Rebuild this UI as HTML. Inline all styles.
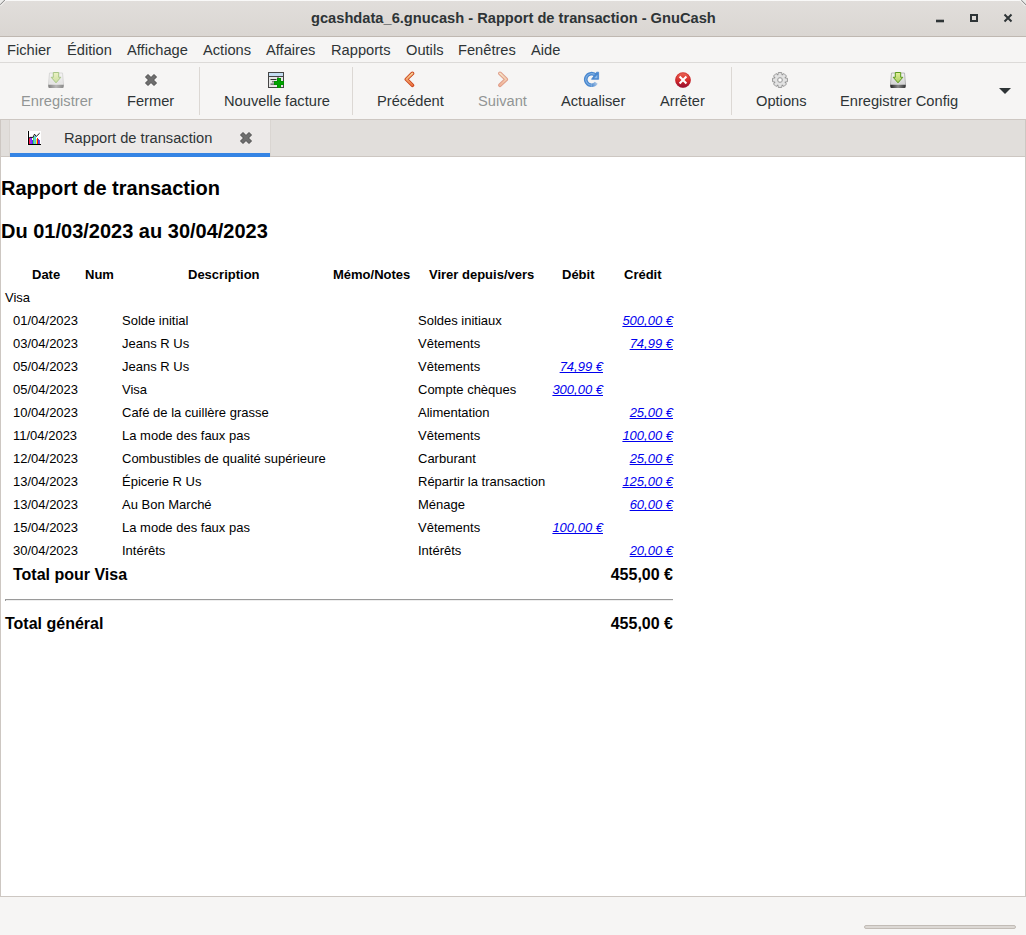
<!DOCTYPE html>
<html><head><meta charset="utf-8">
<style>
html,body{margin:0;padding:0;}
body{width:1026px;height:935px;position:relative;overflow:hidden;background:#f6f5f4;font-family:"Liberation Sans",sans-serif;color:#2e3436;}
.a{position:absolute;white-space:nowrap;}
#title{left:0;top:0;width:1026px;height:36px;background:linear-gradient(to bottom,#e1dedb,#dad6d2);border-bottom:1px solid #bfb8b1;box-shadow:inset 0 1px rgba(255,255,255,0.8);}

.ttl{font-weight:bold;font-size:14.667px;line-height:17px;}
.m{font-size:14.667px;line-height:17px;top:42px;}
#menubar{left:0;top:37px;width:1026px;height:25px;background:#f6f5f4;border-bottom:1px solid #dcdad8;}
#toolbar{left:0;top:63px;width:1026px;height:56px;background:#f6f5f4;border-bottom:1px solid #cdc7c2;}
.sep{position:absolute;top:67px;width:1px;height:48px;background:#dcd8d4;}
.tb{font-size:14.667px;line-height:17px;top:93px;}
.dis{color:#929595;}
#nb{left:0;top:120px;width:1024px;height:776px;border:1px solid #cdc7c2;border-top:0;background:#fff;}
#tabbar{left:1px;top:120px;width:1024px;height:36px;background:#e1dedb;border-bottom:1px solid #cdc7c2;}
#tab{left:10px;top:120px;width:260px;height:33px;background:#ece9e8;border-bottom:4px solid #3584e4;}
.r{color:#000;font-size:13px;line-height:15px;}
.b{font-weight:bold;}
.lnk{color:#0000ee;font-style:italic;text-decoration:underline;text-decoration-skip-ink:none;}
.rt{text-align:right;}
</style></head><body>

<div id="title" class="a"></div>
<svg class="a" style="left:0;top:0;" width="8" height="8" viewBox="0 0 8 8"><path d="M0 0 H5 L0 5 Z" fill="#ececea"/><path d="M0 4.8 L4.8 0" stroke="#808080" stroke-width="1"/><path d="M0.5 6 L6 0.5" stroke="#f4f3f2" stroke-width="1"/></svg>
<svg class="a" style="left:1018px;top:0;" width="8" height="8" viewBox="0 0 8 8"><path d="M8 0 H3 L8 5 Z" fill="#ececea"/><path d="M8 4.8 L3.2 0" stroke="#808080" stroke-width="1"/><path d="M7.5 6 L2 0.5" stroke="#f4f3f2" stroke-width="1"/></svg>
<div class="a ttl" style="left:311px;top:10px;">gcashdata_6.gnucash - Rapport de transaction - GnuCash</div>
<!-- window controls -->
<svg class="a" style="left:936px;top:18px;" width="8" height="6" viewBox="0 0 8 6"><rect x="0" y="1.7" width="8" height="2.6" fill="#2e3436"/></svg>
<div class="a" style="left:970px;top:14px;width:4px;height:4px;border:2px solid #2e3436;"></div>
<svg class="a" style="left:1003px;top:13px;" width="10" height="10" viewBox="0 0 10 10"><path d="M1.5 1.5 L8.5 8.5 M8.5 1.5 L1.5 8.5" stroke="#2e3436" stroke-width="2"/></svg>

<div id="menubar" class="a"></div>
<div class="a m" style="left:7px;">Fichier</div>
<div class="a m" style="left:67px;">Édition</div>
<div class="a m" style="left:127px;">Affichage</div>
<div class="a m" style="left:203px;">Actions</div>
<div class="a m" style="left:266px;">Affaires</div>
<div class="a m" style="left:331px;">Rapports</div>
<div class="a m" style="left:406px;">Outils</div>
<div class="a m" style="left:458px;">Fenêtres</div>
<div class="a m" style="left:531px;">Aide</div>

<div id="toolbar" class="a"></div>
<div class="sep" style="left:199px;"></div>
<div class="sep" style="left:352px;"></div>
<div class="sep" style="left:731px;"></div>
<div class="a tb dis" style="left:21px;">Enregistrer</div>
<div class="a tb" style="left:127px;">Fermer</div>
<div class="a tb" style="left:224px;">Nouvelle facture</div>
<div class="a tb" style="left:377px;">Précédent</div>
<div class="a tb dis" style="left:478px;">Suivant</div>
<div class="a tb" style="left:561px;">Actualiser</div>
<div class="a tb" style="left:660px;">Arrêter</div>
<div class="a tb" style="left:756px;">Options</div>
<div class="a tb" style="left:840px;">Enregistrer Config</div>
<svg class="a" style="left:998px;top:87px;" width="14" height="8" viewBox="0 0 14 8"><path d="M1 1 H13 L7 7 Z" fill="#2e3436"/></svg>

<div id="nb" class="a"></div>
<div id="tabbar" class="a"></div>
<div id="tab" class="a"></div>
<div class="a" style="left:9px;top:120px;width:1px;height:36px;background:#d9d5d1;"></div><div class="a" style="left:270px;top:120px;width:1px;height:36px;background:#d9d5d1;"></div>
<div class="a" style="left:64px;top:130px;font-size:14.667px;line-height:17px;">Rapport de transaction</div>


<!-- icons -->
<svg class="a" style="left:0;top:0;width:0;height:0">
<defs>
<linearGradient id="gDrive" x1="0" y1="0" x2="0" y2="1"><stop offset="0" stop-color="#f4f4f4"/><stop offset="1" stop-color="#d4d4d4"/></linearGradient>
<linearGradient id="gBand" x1="0" y1="0" x2="1" y2="0"><stop offset="0" stop-color="#222"/><stop offset="0.5" stop-color="#888"/><stop offset="1" stop-color="#333"/></linearGradient>
<linearGradient id="gBandD" x1="0" y1="0" x2="1" y2="0"><stop offset="0" stop-color="#aaa"/><stop offset="0.5" stop-color="#c4c4c4"/><stop offset="1" stop-color="#aaa"/></linearGradient>
<linearGradient id="gArrow" x1="0" y1="0" x2="0" y2="1"><stop offset="0" stop-color="#e4f09a"/><stop offset="1" stop-color="#a8cc60"/></linearGradient>
<linearGradient id="gChev" x1="0" y1="0" x2="0" y2="1"><stop offset="0" stop-color="#f8d49a"/><stop offset="1" stop-color="#ec7440"/></linearGradient>
<linearGradient id="gStop" x1="0" y1="0" x2="0" y2="1"><stop offset="0" stop-color="#ee6a58"/><stop offset="0.55" stop-color="#d42a2a"/><stop offset="1" stop-color="#8c0c34"/></linearGradient>
<linearGradient id="gRef" x1="0" y1="0" x2="0" y2="1"><stop offset="0" stop-color="#6ea0dc"/><stop offset="1" stop-color="#3f7fcc"/></linearGradient>
</defs></svg>

<!-- Enregistrer (disabled save) -->
<svg class="a" style="left:48px;top:72px;opacity:0.55" width="16" height="16" viewBox="0 0 16 16">
<path d="M1.5 1 H14.5 L15.5 12 H0.5 Z" fill="url(#gDrive)" stroke="#b8b8b8" stroke-width="0.8"/>
<rect x="0.3" y="12" width="15.4" height="4" rx="1.2" fill="url(#gBand)"/>
<rect x="1" y="11.6" width="14" height="1" fill="#f8f8f8"/>
<path d="M5.3 0.5 H10.7 V5.3 H12.8 L8 10.8 L3.2 5.3 H5.3 Z" fill="url(#gArrow)" stroke="#6aa030" stroke-width="1"/>
</svg>
<!-- Fermer X -->
<svg class="a" style="left:145px;top:74px;" width="12" height="12" viewBox="0 0 12 12">
<path d="M0.5 3 L3 0.5 L6 3.5 L9 0.5 L11.5 3 L8.5 6 L11.5 9 L9 11.5 L6 8.5 L3 11.5 L0.5 9 L3.5 6 Z" fill="#6e6e6e" stroke="#4a4a4a" stroke-width="1" stroke-linejoin="miter"/>
</svg>
<!-- Nouvelle facture -->
<svg class="a" style="left:268px;top:72px;" width="16" height="16" viewBox="0 0 16 16">
<rect x="0.5" y="0.5" width="15" height="15" fill="#e6e6e6" stroke="#454545" stroke-width="1"/>
<rect x="1" y="1" width="14" height="3" fill="#c4ddf2"/>
<rect x="1" y="4" width="14" height="1" fill="#454545"/>
<rect x="2.5" y="7" width="6" height="1" fill="#333"/>
<rect x="4" y="9.3" width="4" height="1" fill="#555"/>
<rect x="2.5" y="11.6" width="5" height="1" fill="#333"/>
<path d="M9 6 H13 V9 H16 V13 H13 V16 H9 V13 H6 V9 H9 Z" fill="#008c00"/>
<path d="M9.8 6.8 H12.2 V9.8 H15.2 V12.2 H12.2 V15.2 H9.8 V12.2 H6.8 V9.8 H9.8 Z" fill="#00a400"/>
<rect x="9.5" y="5" width="1" height="1" fill="#454545"/>
</svg>
<!-- Precedent -->
<svg class="a" style="left:402px;top:71px;" width="14" height="18" viewBox="0 0 14 18">
<path d="M10.4 2.4 L4.4 8.3 L10.4 14.2" fill="none" stroke="#c9441c" stroke-width="3.7" stroke-linecap="round" stroke-linejoin="round"/>
<path d="M10.4 2.4 L4.4 8.3 L10.4 14.2" fill="none" stroke="url(#gChev)" stroke-width="1.9" stroke-linecap="round" stroke-linejoin="round"/>
</svg>
<!-- Suivant (disabled) -->
<svg class="a" style="left:495px;top:71px;opacity:0.5" width="14" height="18" viewBox="0 0 14 18">
<path d="M5 2.4 L11.2 8.4 L5 14.2" fill="none" stroke="#c9441c" stroke-width="3.7" stroke-linecap="round" stroke-linejoin="round"/>
<path d="M5 2.4 L11.2 8.4 L5 14.2" fill="none" stroke="url(#gChev)" stroke-width="1.9" stroke-linecap="round" stroke-linejoin="round"/>
</svg>
<!-- Actualiser -->
<svg class="a" style="left:580px;top:68px;" width="24" height="24" viewBox="0 0 24 24">
<defs><linearGradient id="gTail" gradientUnits="userSpaceOnUse" x1="11" y1="17" x2="17" y2="14"><stop offset="0" stop-color="#4a88cf"/><stop offset="1" stop-color="#4a88cf" stop-opacity="0.35"/></linearGradient></defs>
<path d="M15.99 7.72 A5.8 5.8 0 1 0 11.55 17.25" fill="none" stroke="#4a88cf" stroke-width="3.6"/>
<path d="M11.55 17.25 A5.8 5.8 0 0 0 16.30 14.78" fill="none" stroke="url(#gTail)" stroke-width="3.6"/>
<path d="M15.99 7.72 A5.8 5.8 0 1 0 11.55 17.25" fill="none" stroke="#8fbbe9" stroke-width="1.1" opacity="0.8"/>
<path d="M16.6 4.2 H18.6 V11.3 H11.5 Z" fill="#4a88cf" stroke="#4a88cf" stroke-width="0.8" stroke-linejoin="round"/>
<path d="M17.4 6.8 V10.2 H14 Z" fill="#8fbbe9"/>
</svg>
<!-- Arreter -->
<svg class="a" style="left:675px;top:72px;" width="16" height="16" viewBox="0 0 16 16">
<circle cx="8" cy="8" r="7.8" fill="url(#gStop)"/>
<circle cx="8" cy="8" r="7.2" fill="none" stroke="#b81c2a" stroke-width="0.8" opacity="0.6"/>
<path d="M4.6 4.6 L11.4 11.4 M11.4 4.6 L4.6 11.4" stroke="#ffffff" stroke-width="2.1"/>
</svg>
<!-- Options gear -->
<svg class="a" style="left:772px;top:72px;" width="16" height="16" viewBox="0 0 16 16">
<path id="gear" d="M5.80 3.07 L6.29 0.59 L9.71 0.59 L10.20 3.07 L9.94 2.96 L12.03 1.55 L14.45 3.97 L13.04 6.06 L12.93 5.80 L15.41 6.29 L15.41 9.71 L12.93 10.20 L13.04 9.94 L14.45 12.03 L12.03 14.45 L9.94 13.04 L10.20 12.93 L9.71 15.41 L6.29 15.41 L5.80 12.93 L6.06 13.04 L3.97 14.45 L1.55 12.03 L2.96 9.94 L3.07 10.20 L0.59 9.71 L0.59 6.29 L3.07 5.80 L2.96 6.06 L1.55 3.97 L3.97 1.55 L6.06 2.96 Z" fill="#e2e2e2" stroke="#8e8e8e" stroke-width="0.9" stroke-linejoin="round"/>
<circle cx="8" cy="8" r="2.4" fill="none" stroke="#a0a0a0" stroke-width="1"/>
<circle cx="8" cy="8" r="1.3" fill="#ffffff"/>
</svg>
<!-- Enregistrer Config (save) -->
<svg class="a" style="left:890px;top:72px;" width="16" height="16" viewBox="0 0 16 16">
<path d="M1.5 1 H14.5 L15.5 12 H0.5 Z" fill="url(#gDrive)" stroke="#a8a8a8" stroke-width="0.8"/>
<rect x="0.3" y="12" width="15.4" height="4" rx="1.2" fill="url(#gBand)"/>
<rect x="1" y="11.6" width="14" height="1" fill="#f4f4f4"/>
<path d="M5.3 0.5 H10.7 V5.3 H12.8 L8 10.8 L3.2 5.3 H5.3 Z" fill="url(#gArrow)" stroke="#5a9a1c" stroke-width="1"/>
</svg>
<!-- tab chart icon -->
<svg class="a" style="left:27px;top:131px;" width="14" height="14" viewBox="0 0 14 14" shape-rendering="crispEdges">
<rect x="0" y="0" width="14" height="14" fill="#ffffff"/>
<rect x="2" y="7" width="1" height="6" fill="#ff1a4a"/>
<rect x="3" y="6" width="1" height="7" fill="#9b30f0"/>
<rect x="4" y="6" width="1" height="7" fill="#8a30f0"/>
<rect x="5" y="9" width="1" height="4" fill="#3838f0"/>
<rect x="6" y="6" width="1" height="7" fill="#38e858"/>
<rect x="7" y="5" width="1" height="8" fill="#88b0e0"/>
<rect x="8" y="5" width="1" height="8" fill="#38e0d8"/>
<rect x="9" y="8" width="1" height="5" fill="#f8f040"/>
<rect x="10" y="7" width="1" height="6" fill="#ff1010"/>
<rect x="11" y="8" width="1" height="5" fill="#3050f0"/>
<rect x="12" y="9" width="1" height="4" fill="#9030e0"/>
<path d="M1.8 7.2 L3 6.4 H6 L7.5 3.2 L9.3 5.4 L12.6 2.2" fill="none" stroke="#000" stroke-width="0.9" shape-rendering="auto"/>
<rect x="1" y="0" width="1" height="14" fill="#000"/>
<rect x="1" y="13" width="13" height="1" fill="#000"/>
</svg>
<!-- tab close X -->
<svg class="a" style="left:240px;top:132px;" width="12" height="12" viewBox="0 0 12 12">
<path d="M0.5 3 L3 0.5 L6 3.5 L9 0.5 L11.5 3 L8.5 6 L11.5 9 L9 11.5 L6 8.5 L3 11.5 L0.5 9 L3.5 6 Z" fill="#6e6e6e" stroke="#4a4a4a" stroke-width="1" stroke-linejoin="miter"/>
</svg>
<!-- progress bar in status -->
<div class="a" style="left:864px;top:925px;width:150px;height:2px;background:#dcd8d4;border:1px solid #c2bcb6;border-radius:3px;"></div>

<!-- report -->
<div class="a r b" style="left:1px;top:177px;font-size:20px;line-height:22px;">Rapport de transaction</div>
<div class="a r b" style="left:1px;top:220px;font-size:20px;line-height:22px;">Du 01/03/2023 au 30/04/2023</div>

<div style="--r0:313px;">
<div class="a r b" style="left:32px;top:267px;">Date</div>
<div class="a r b" style="left:85px;top:267px;">Num</div>
<div class="a r b" style="left:188px;top:267px;">Description</div>
<div class="a r b" style="left:333px;top:267px;">Mémo/Notes</div>
<div class="a r b" style="left:429px;top:267px;">Virer depuis/vers</div>
<div class="a r b" style="left:562px;top:267px;">Débit</div>
<div class="a r b" style="left:624px;top:267px;">Crédit</div>
<div class="a r" style="left:5px;top:290px;">Visa</div>
<div class="a r" style="left:13px;top:calc(var(--r0) + 0px);">01/04/2023</div>
<div class="a r" style="left:122px;top:calc(var(--r0) + 0px);">Solde initial</div>
<div class="a r" style="left:418px;top:calc(var(--r0) + 0px);">Soldes initiaux</div>
<div class="a r rt" style="left:569px;width:104px;top:calc(var(--r0) + 0px);"><span class="lnk">500,00 €</span></div>
<div class="a r" style="left:13px;top:calc(var(--r0) + 23px);">03/04/2023</div>
<div class="a r" style="left:122px;top:calc(var(--r0) + 23px);">Jeans R Us</div>
<div class="a r" style="left:418px;top:calc(var(--r0) + 23px);">Vêtements</div>
<div class="a r rt" style="left:569px;width:104px;top:calc(var(--r0) + 23px);"><span class="lnk">74,99 €</span></div>
<div class="a r" style="left:13px;top:calc(var(--r0) + 46px);">05/04/2023</div>
<div class="a r" style="left:122px;top:calc(var(--r0) + 46px);">Jeans R Us</div>
<div class="a r" style="left:418px;top:calc(var(--r0) + 46px);">Vêtements</div>
<div class="a r rt" style="left:499px;width:104px;top:calc(var(--r0) + 46px);"><span class="lnk">74,99 €</span></div>
<div class="a r" style="left:13px;top:calc(var(--r0) + 69px);">05/04/2023</div>
<div class="a r" style="left:122px;top:calc(var(--r0) + 69px);">Visa</div>
<div class="a r" style="left:418px;top:calc(var(--r0) + 69px);">Compte chèques</div>
<div class="a r rt" style="left:499px;width:104px;top:calc(var(--r0) + 69px);"><span class="lnk">300,00 €</span></div>
<div class="a r" style="left:13px;top:calc(var(--r0) + 92px);">10/04/2023</div>
<div class="a r" style="left:122px;top:calc(var(--r0) + 92px);">Café de la cuillère grasse</div>
<div class="a r" style="left:418px;top:calc(var(--r0) + 92px);">Alimentation</div>
<div class="a r rt" style="left:569px;width:104px;top:calc(var(--r0) + 92px);"><span class="lnk">25,00 €</span></div>
<div class="a r" style="left:13px;top:calc(var(--r0) + 115px);">11/04/2023</div>
<div class="a r" style="left:122px;top:calc(var(--r0) + 115px);">La mode des faux pas</div>
<div class="a r" style="left:418px;top:calc(var(--r0) + 115px);">Vêtements</div>
<div class="a r rt" style="left:569px;width:104px;top:calc(var(--r0) + 115px);"><span class="lnk">100,00 €</span></div>
<div class="a r" style="left:13px;top:calc(var(--r0) + 138px);">12/04/2023</div>
<div class="a r" style="left:122px;top:calc(var(--r0) + 138px);">Combustibles de qualité supérieure</div>
<div class="a r" style="left:418px;top:calc(var(--r0) + 138px);">Carburant</div>
<div class="a r rt" style="left:569px;width:104px;top:calc(var(--r0) + 138px);"><span class="lnk">25,00 €</span></div>
<div class="a r" style="left:13px;top:calc(var(--r0) + 161px);">13/04/2023</div>
<div class="a r" style="left:122px;top:calc(var(--r0) + 161px);">Épicerie R Us</div>
<div class="a r" style="left:418px;top:calc(var(--r0) + 161px);">Répartir la transaction</div>
<div class="a r rt" style="left:569px;width:104px;top:calc(var(--r0) + 161px);"><span class="lnk">125,00 €</span></div>
<div class="a r" style="left:13px;top:calc(var(--r0) + 184px);">13/04/2023</div>
<div class="a r" style="left:122px;top:calc(var(--r0) + 184px);">Au Bon Marché</div>
<div class="a r" style="left:418px;top:calc(var(--r0) + 184px);">Ménage</div>
<div class="a r rt" style="left:569px;width:104px;top:calc(var(--r0) + 184px);"><span class="lnk">60,00 €</span></div>
<div class="a r" style="left:13px;top:calc(var(--r0) + 207px);">15/04/2023</div>
<div class="a r" style="left:122px;top:calc(var(--r0) + 207px);">La mode des faux pas</div>
<div class="a r" style="left:418px;top:calc(var(--r0) + 207px);">Vêtements</div>
<div class="a r rt" style="left:499px;width:104px;top:calc(var(--r0) + 207px);"><span class="lnk">100,00 €</span></div>
<div class="a r" style="left:13px;top:calc(var(--r0) + 230px);">30/04/2023</div>
<div class="a r" style="left:122px;top:calc(var(--r0) + 230px);">Intérêts</div>
<div class="a r" style="left:418px;top:calc(var(--r0) + 230px);">Intérêts</div>
<div class="a r rt" style="left:569px;width:104px;top:calc(var(--r0) + 230px);"><span class="lnk">20,00 €</span></div>
<div class="a r b" style="left:13px;top:566px;font-size:16px;line-height:18px;">Total pour Visa</div>
<div class="a r b rt" style="left:569px;width:104px;top:566px;font-size:16px;line-height:18px;">455,00 €</div>
<div class="a" style="left:5px;top:599px;width:668px;height:1px;background:#9a9a9a;"></div><div class="a" style="left:5px;top:600px;width:1px;height:1px;background:#9a9a9a;"></div><div class="a" style="left:6px;top:600px;width:667px;height:1px;background:#eeeeee;"></div>
<div class="a r b" style="left:5px;top:615px;font-size:16px;line-height:18px;">Total général</div>
<div class="a r b rt" style="left:569px;width:104px;top:615px;font-size:16px;line-height:18px;">455,00 €</div>
</div>
</body></html>
